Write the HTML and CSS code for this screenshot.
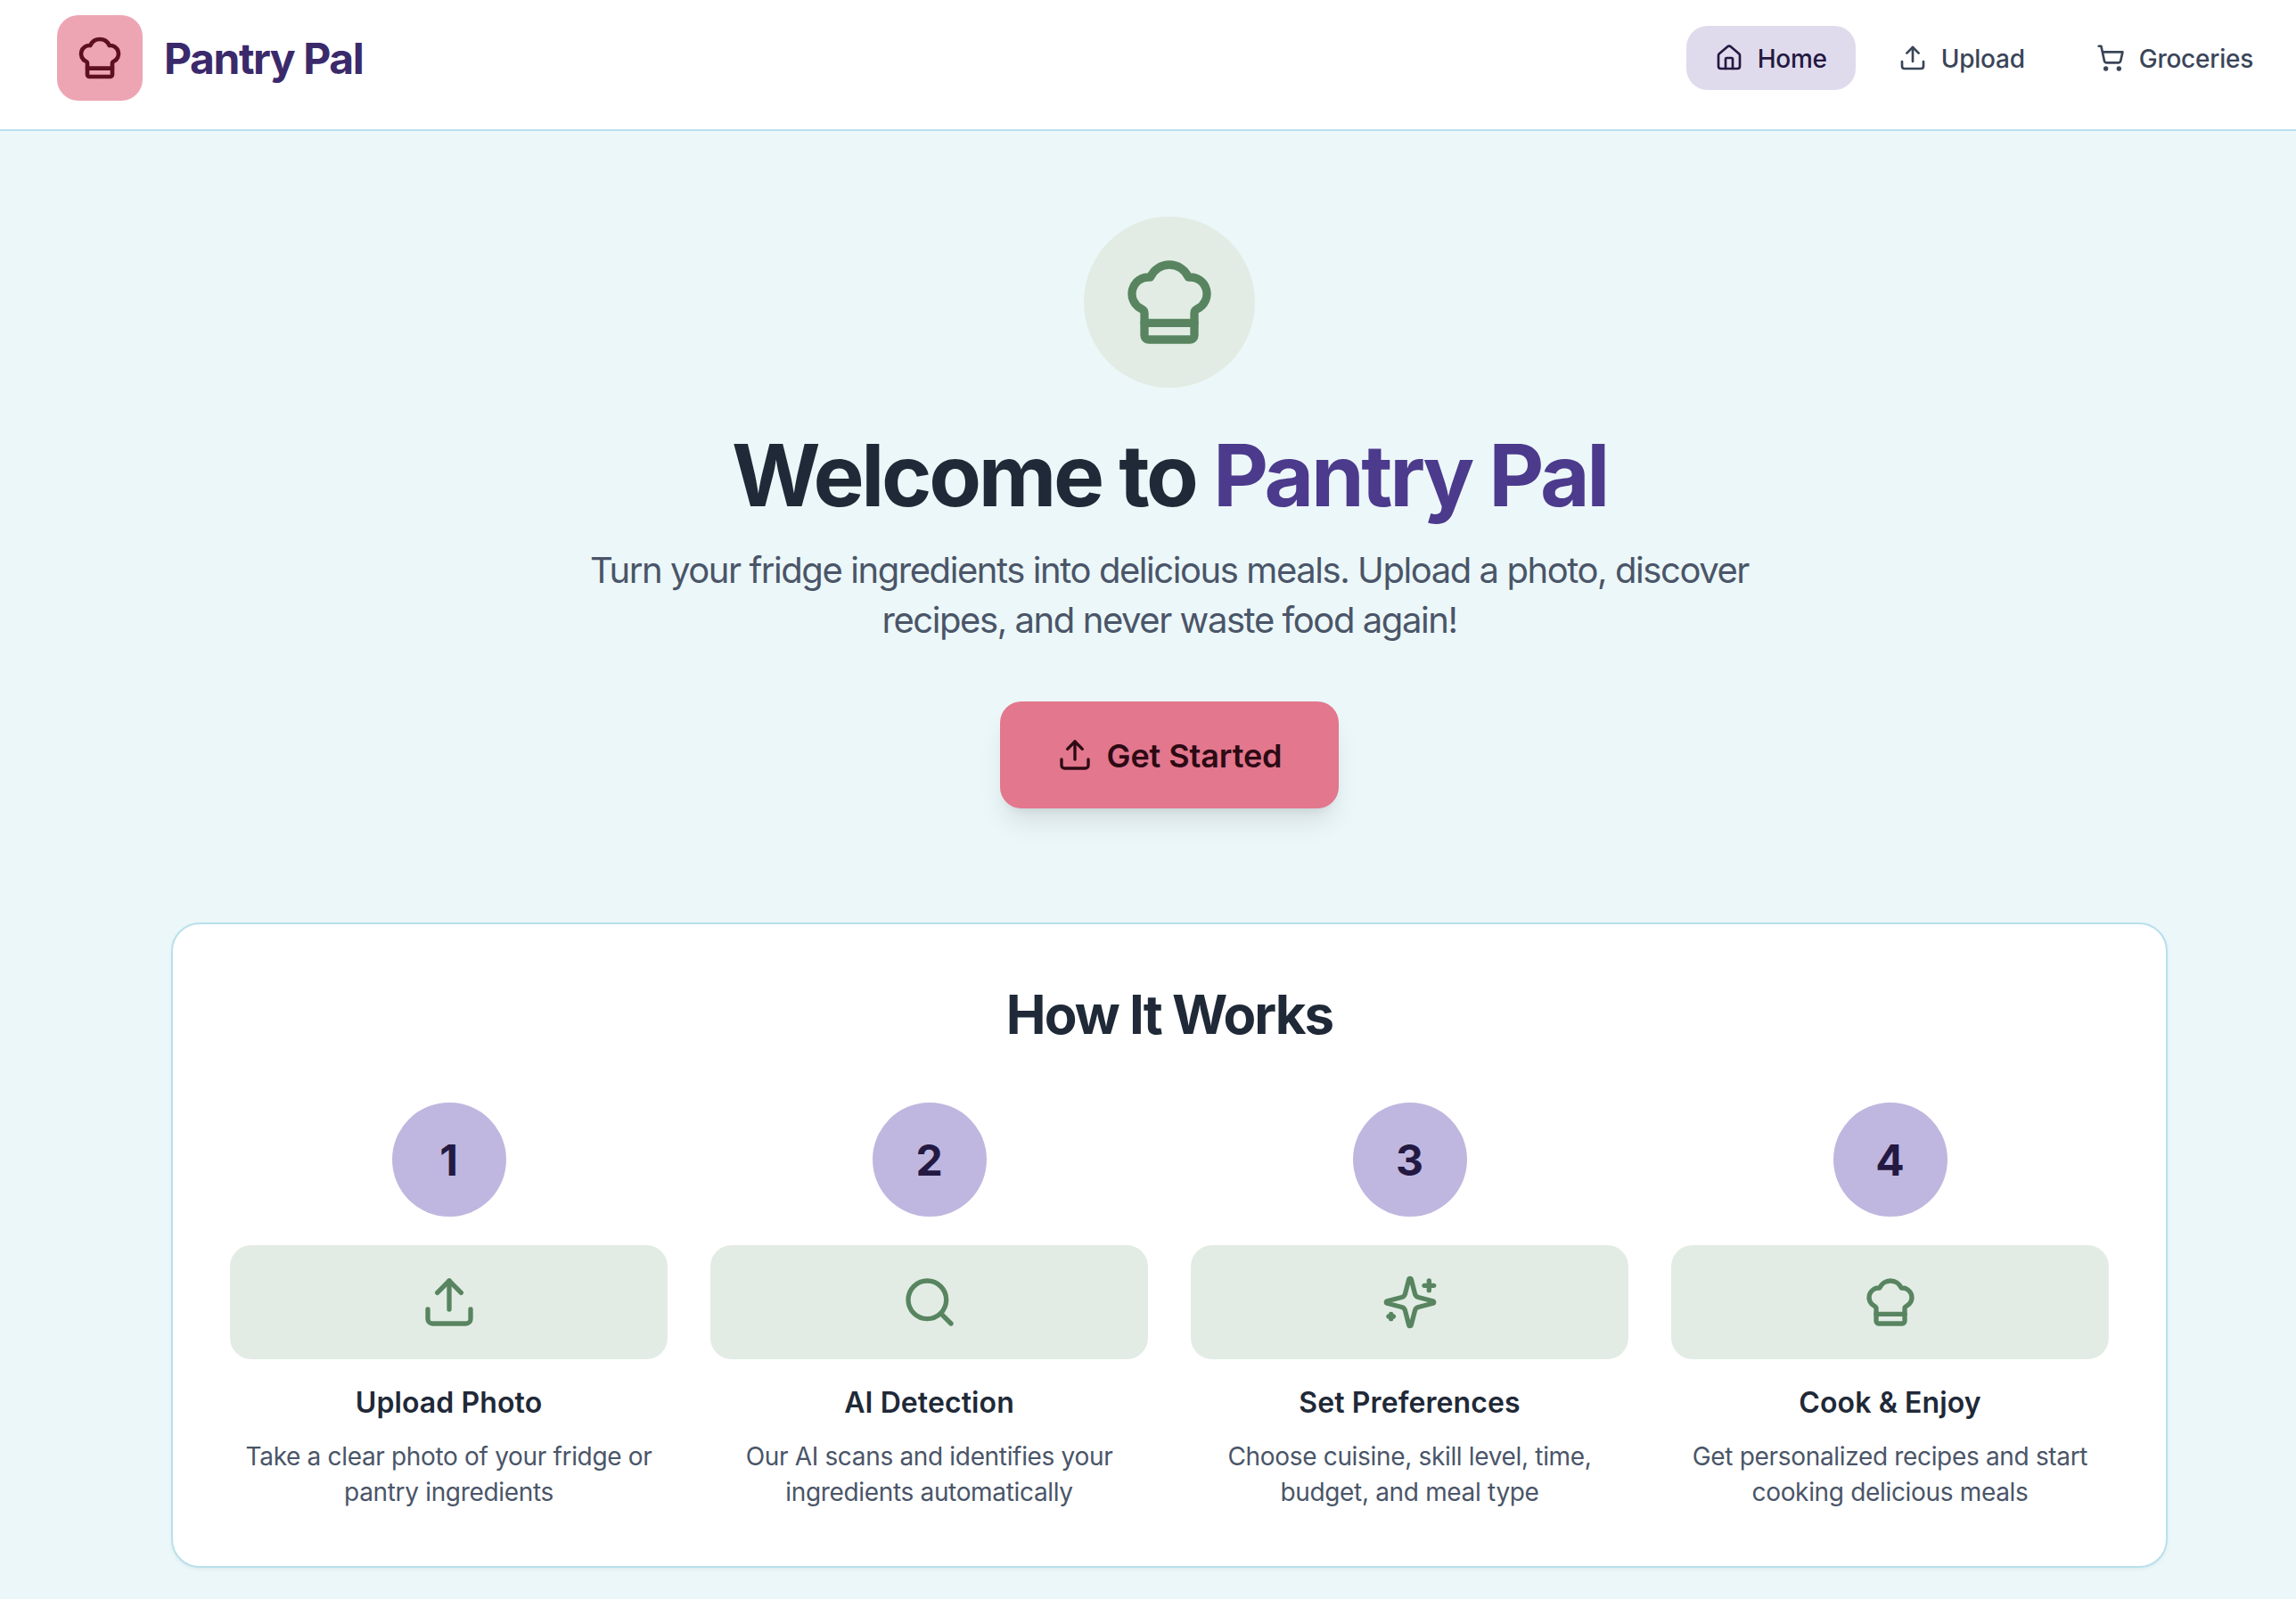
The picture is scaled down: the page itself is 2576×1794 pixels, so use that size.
FILE: index.html
```html
<!DOCTYPE html>
<html lang="en">
<head>
<meta charset="utf-8">
<title>Pantry Pal</title>
<link rel="stylesheet" href="styles.css">
</head>
<body>
<svg class="defs" width="0" height="0" aria-hidden="true">
  <symbol id="i-hat" viewBox="0 0 24 24"><path d="M17 21a1 1 0 0 0 1-1v-5.35c0-.457.316-.844.727-1.041a4 4 0 0 0-2.134-7.589 5 5 0 0 0-9.186 0 4 4 0 0 0-2.134 7.588c.411.198.727.585.727 1.041V20a1 1 0 0 0 1 1Z"/><path d="M6 17h12"/></symbol>
  <symbol id="i-upload" viewBox="0 0 24 24"><path d="M21 15v4a2 2 0 0 1-2 2H5a2 2 0 0 1-2-2v-4"/><polyline points="17 8 12 3 7 8"/><line x1="12" x2="12" y1="3" y2="15"/></symbol>
  <symbol id="i-home" viewBox="0 0 24 24"><path d="M15 21v-8a1 1 0 0 0-1-1h-4a1 1 0 0 0-1 1v8"/><path d="M3 10a2 2 0 0 1 .709-1.528l7-5.999a2 2 0 0 1 2.582 0l7 5.999A2 2 0 0 1 21 10v9a2 2 0 0 1-2 2H5a2 2 0 0 1-2-2z"/></symbol>
  <symbol id="i-cart" viewBox="0 0 24 24"><circle cx="8" cy="21" r="1"/><circle cx="19" cy="21" r="1"/><path d="M2.05 2.05h2l2.66 12.42a2 2 0 0 0 2 1.58h9.78a2 2 0 0 0 1.95-1.57l1.65-7.43H5.12"/></symbol>
  <symbol id="i-search" viewBox="0 0 24 24"><circle cx="11" cy="11" r="8"/><path d="m21 21-4.3-4.3"/></symbol>
  <symbol id="i-sparkles" viewBox="0 0 24 24"><path d="M9.937 15.5A2 2 0 0 0 8.5 14.063l-6.135-1.582a.5.5 0 0 1 0-.962L8.5 9.936A2 2 0 0 0 9.937 8.5l1.582-6.135a.5.5 0 0 1 .963 0L14.063 8.5A2 2 0 0 0 15.5 9.937l6.135 1.581a.5.5 0 0 1 0 .964L15.5 14.063a2 2 0 0 0-1.437 1.437l-1.582 6.135a.5.5 0 0 1-.963 0z"/><path d="M20 3v4"/><path d="M22 5h-4"/><path d="M4 17v2"/><path d="M5 18H3"/></symbol>
</svg>

<header class="topbar">
  <div class="brand">
    <div class="brand-mark"><svg class="icon icon-56"><use href="#i-hat"/></svg></div>
    <span class="brand-name">Pantry Pal</span>
  </div>
  <nav class="nav">
    <a class="nav-link is-active"><svg class="icon icon-32"><use href="#i-home"/></svg><span class="nav-label">Home</span></a>
    <a class="nav-link"><svg class="icon icon-32"><use href="#i-upload"/></svg><span class="nav-label">Upload</span></a>
    <a class="nav-link"><svg class="icon icon-32"><use href="#i-cart"/></svg><span class="nav-label">Groceries</span></a>
  </nav>
</header>

<main class="main">
  <section class="hero">
    <div class="hero-badge"><svg class="icon icon-112"><use href="#i-hat"/></svg></div>
    <h1 class="hero-title">Welcome to <span class="accent">Pantry Pal</span></h1>
    <p class="hero-text">Turn your fridge ingredients into delicious meals. Upload a photo, discover recipes, and never waste food again!</p>
    <a class="cta"><svg class="icon icon-40"><use href="#i-upload"/></svg><span class="cta-label">Get Started</span></a>
  </section>

  <section class="how">
    <h2 class="how-title">How It Works</h2>
    <div class="steps">
      <article class="step">
        <div class="step-num">1</div>
        <div class="step-icon"><svg class="icon icon-64"><use href="#i-upload"/></svg></div>
        <h3 class="step-title">Upload Photo</h3>
        <p class="step-text">Take a clear photo of your fridge or pantry ingredients</p>
      </article>
      <article class="step">
        <div class="step-num">2</div>
        <div class="step-icon"><svg class="icon icon-64"><use href="#i-search"/></svg></div>
        <h3 class="step-title">AI Detection</h3>
        <p class="step-text">Our AI scans and identifies your ingredients automatically</p>
      </article>
      <article class="step">
        <div class="step-num">3</div>
        <div class="step-icon"><svg class="icon icon-64"><use href="#i-sparkles"/></svg></div>
        <h3 class="step-title">Set Preferences</h3>
        <p class="step-text">Choose cuisine, skill level, time, budget, and meal type</p>
      </article>
      <article class="step">
        <div class="step-num">4</div>
        <div class="step-icon"><svg class="icon icon-64"><use href="#i-hat"/></svg></div>
        <h3 class="step-title">Cook &amp; Enjoy</h3>
        <p class="step-text">Get personalized recipes and start cooking delicious meals</p>
      </article>
    </div>
  </section>
</main>
</body>
</html>
```

FILE: styles.css
```css
* { box-sizing: border-box; }
html, body { margin: 0; height: 100%; }
body {
  background: #ecf7f9;
  font-family: Inter, "Liberation Sans", sans-serif;
  color: #1f2937;
  overflow: hidden;
}
.defs { display: block; height: 0; }
.icon {
  fill: none;
  stroke: currentColor;
  stroke-width: 2;
  stroke-linecap: round;
  stroke-linejoin: round;
  flex: none;
  display: block;
}
.icon-32 { width: 32px; height: 32px; }
.icon-40 { width: 40px; height: 40px; }
.icon-56 { width: 56px; height: 56px; }
.icon-64 { width: 64px; height: 64px; }
.icon-112 { width: 112px; height: 112px; }

.topbar {
  display: flex;
  align-items: center;
  justify-content: space-between;
  height: 147px;
  padding: 17px 16px 32px 64px;
  background: #fff;
  border-bottom: 2px solid #b8e0ec;
}
.brand { display: flex; align-items: center; gap: 24px; }
.brand-mark {
  width: 96px;
  height: 96px;
  border-radius: 24px;
  background: #eda5b4;
  color: #5e1020;
  display: flex;
  align-items: center;
  justify-content: center;
}
.brand-name {
  padding-top: 2px;
  font-size: 48px;
  line-height: 64px;
  font-weight: 700;
  color: #3b2a6b;
  letter-spacing: -1.45px;
}
.nav { display: flex; gap: 16px; }
.nav-link {
  display: flex;
  align-items: center;
  gap: 16px;
  padding: 16px 32px;
  height: 72px;
  border-radius: 24px;
  font-size: 28px;
  line-height: 40px;
  font-weight: 500;
  color: #3a4558;
  letter-spacing: -0.25px;
}
.nav-label { padding-top: 2px; }
.nav-link.is-active { background: #e0dbec; color: #231942; }

.main { padding: 0 144px 0 192px; }
.hero {
  display: flex;
  flex-direction: column;
  align-items: center;
  padding-top: 96px;
  text-align: center;
}
.hero-badge {
  width: 192px;
  height: 192px;
  border-radius: 50%;
  background: #e2ece4;
  color: #588560;
  display: flex;
  align-items: center;
  justify-content: center;
  margin-bottom: 48px;
}
.hero-title {
  margin: 0 0 32px;
  padding-top: 2px;
  height: 96px;
  font-size: 96px;
  line-height: 96px;
  font-weight: 700;
  color: #1f2937;
  letter-spacing: -3.35px;
}
.accent { color: #4c3a8c; }
.hero-text {
  margin: 0 0 64px;
  width: 1344px;
  height: 112px;
  padding-top: 1px;
  font-size: 40px;
  line-height: 56px;
  color: #4a5568;
  letter-spacing: -1.43px;
}
.cta {
  display: flex;
  align-items: center;
  gap: 16px;
  height: 120px;
  padding: 32px 64px;
  border-radius: 24px;
  background: #e2778d;
  color: #2d0a14;
  font-size: 36px;
  line-height: 56px;
  font-weight: 600;
  letter-spacing: -0.1px;
  box-shadow: 0 20px 30px -6px rgba(0,0,0,.1), 0 8px 12px -8px rgba(0,0,0,.1);
}
.cta-label { padding-top: 1px; }

.how {
  margin-top: 128px;
  padding: 64px;
  background: #fff;
  border: 2px solid #b8e0ec;
  border-radius: 32px;
  box-shadow: 0 2px 4px rgba(0,0,0,.05);
}
.how-title {
  margin: 0 0 64px;
  height: 72px;
  padding-top: 1px;
  text-align: center;
  font-size: 60px;
  line-height: 72px;
  font-weight: 700;
  color: #1f2937;
  letter-spacing: -1.95px;
}
.steps { display: grid; grid-template-columns: repeat(4, 1fr); gap: 48px; }
.step { display: flex; flex-direction: column; align-items: center; text-align: center; }
.step-num {
  width: 128px;
  height: 128px;
  border-radius: 50%;
  background: #bfb7df;
  color: #231942;
  font-size: 48px;
  font-weight: 700;
  display: flex;
  align-items: center;
  justify-content: center;
  margin-bottom: 32px;
}
.step-icon {
  align-self: stretch;
  height: 128px;
  border-radius: 24px;
  background: #e2ece4;
  color: #588560;
  display: flex;
  align-items: center;
  justify-content: center;
  margin-bottom: 24px;
}
.step-title {
  margin: 0 0 16px;
  height: 48px;
  padding-top: 1px;
  font-size: 32px;
  line-height: 48px;
  font-weight: 600;
  color: #1f2937;
  letter-spacing: 0.1px;
}
.step-text {
  margin: 0;
  height: 80px;
  padding-top: 1px;
  font-size: 28px;
  line-height: 40px;
  color: #4a5568;
  letter-spacing: -0.33px;
}
```
